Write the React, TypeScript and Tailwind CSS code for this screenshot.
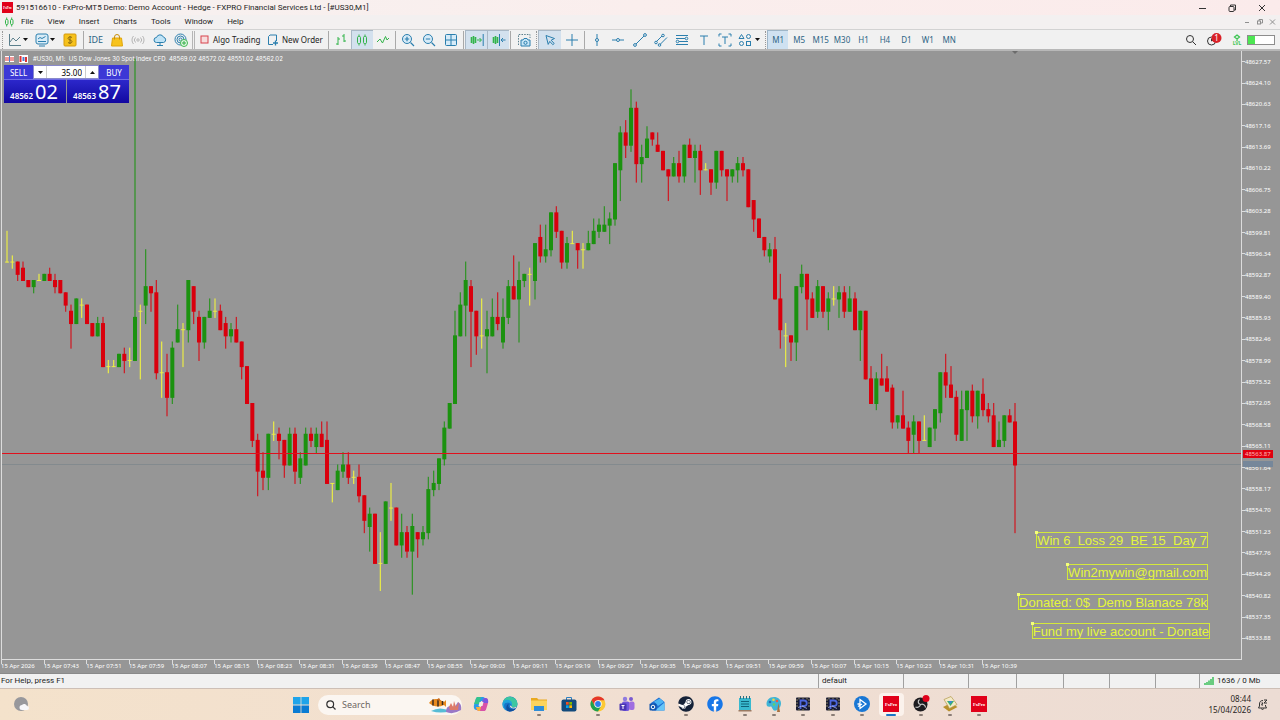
import React, { FC, ReactNode, memo, useState } from "react";
import { FaFacebook, FaSteam } from "react-icons/fa";

// open, high, low, close in points above 48500
type Candle = [number, number, number, number];

const CANDLES: Candle[] = [
  [95, 100, 95, 95], [95, 96, 94, 95], [95, 95, 92, 93], [94, 95, 92, 92], [92, 92, 91, 91],
  [91, 92, 90, 92], [92, 93, 92, 92], [92, 93, 92, 93], [93, 94, 92, 92], [92, 93, 90, 91],
  [92, 92, 90, 90], [90, 90, 87, 88], [87, 88, 81, 85], [85, 89, 85, 89], [88, 89, 86, 88],
  [88, 88, 85, 85], [85, 85, 83, 83], [83, 86, 83, 85], [85, 86, 78, 78], [78, 79, 77, 78],
  [78, 79, 78, 78], [78, 80, 78, 80], [80, 81, 77, 79], [79, 81, 78, 79], [79, 128, 79, 86],
  [87, 88, 76, 87], [88, 97, 85, 91], [91, 91, 87, 90], [90, 92, 76, 77], [77, 82, 73, 77],
  [77, 80, 70, 73], [73, 82, 72, 81], [82, 88, 82, 84], [84, 85, 78, 84], [84, 92, 82, 92],
  [91, 91, 85, 87], [86, 87, 79, 82], [82, 86, 81, 86], [86, 89, 86, 87], [87, 89, 86, 87],
  [87, 88, 84, 84], [85, 86, 81, 83], [83, 85, 82, 84], [84, 86, 82, 82], [82, 82, 76, 78],
  [78, 78, 72, 72], [72, 72, 65, 66], [66, 67, 57, 61], [61, 64, 58, 60], [60, 67, 58, 67],
  [67, 69, 66, 67], [67, 68, 63, 66], [66, 66, 60, 62], [62, 68, 62, 67], [67, 68, 59, 61],
  [60, 64, 59, 63], [62, 68, 62, 67], [67, 68, 65, 66], [65, 68, 64, 67], [67, 69, 65, 65],
  [66, 69, 59, 59], [59, 59, 56, 59], [58, 62, 58, 61], [61, 64, 60, 62], [62, 64, 59, 60],
  [60, 61, 59, 60], [60, 62, 56, 57], [57, 57, 51, 53], [52, 55, 48, 54], [54, 54, 46, 46],
  [46, 51, 41.6, 46], [46, 56, 46, 56], [55, 59, 53, 55], [55, 55, 49, 49], [49, 54, 47, 51],
  [51, 52, 47, 48], [48, 54, 41, 52], [51, 51, 47, 50], [50, 52, 49, 51], [51, 60, 50, 58],
  [58, 61, 57, 59], [59, 63, 58, 63], [63, 69, 62, 68], [68, 72, 68, 72], [72, 87, 72, 83],
  [83, 90, 83, 88], [88, 95, 83, 92], [91, 92, 78, 87], [87, 87, 80, 83], [83, 89, 81, 83],
  [83, 87, 77, 84], [83, 89, 83, 86], [86, 90, 84, 85], [82, 89, 81, 86], [86, 92, 85, 91],
  [91, 96, 89, 89], [89, 95, 82, 92], [92, 93, 91, 93], [93, 94, 88, 93], [92, 98, 89, 98],
  [99, 101, 95, 96], [96, 101, 95, 97], [97, 103, 96, 103], [103, 104, 99, 100], [100, 100, 94, 95],
  [95, 99, 94, 98], [98, 100, 98, 98], [98, 98, 94, 97], [97, 98, 94, 97], [97, 100, 97, 98],
  [98, 102, 98, 100], [100, 102, 99, 101], [100, 104, 100, 101], [101, 103, 98, 102], [102, 111, 101, 111],
  [110, 117, 105, 116], [116, 118, 112, 114], [114, 123, 113, 120], [120, 121, 108, 111], [111, 114, 108, 112],
  [112, 117, 112, 115], [116, 116, 114, 115], [114, 116, 113, 113], [113, 113, 110, 110], [110, 110, 105, 109],
  [109, 112, 109, 111], [111, 113, 108, 109], [109, 114, 108, 114], [114, 115, 112, 112], [112, 114, 108, 113],
  [113, 114, 106, 110], [110, 111, 110, 110], [110, 110, 106, 108], [108, 113, 107, 113], [113, 113, 109, 110],
  [110, 110, 105, 109], [109, 110, 108, 110], [110, 112, 108, 111], [111, 112, 109, 110], [110, 110, 104, 104],
  [105, 105, 100, 102], [102, 102, 99, 99], [99, 99, 96, 97], [96, 98, 95, 97], [97, 99, 89, 89],
  [89, 93, 81, 84], [83, 85, 78, 83], [83, 83, 79, 82], [82, 91, 79, 91], [91, 94.5, 90, 93],
  [93, 93, 84, 89], [89, 90, 86, 86], [87, 92, 86, 91], [91, 91, 86, 87], [87, 90, 84, 89],
  [89, 91, 88, 89], [89, 91, 86, 90], [90, 91, 86, 87], [87, 91, 87, 89], [89, 90, 84, 84],
  [84, 87, 79, 87], [87, 87, 76, 76], [76, 78, 72, 72], [72, 77, 71, 76], [76, 80, 75, 75],
  [76, 78, 74, 74], [74.5, 75, 68, 69], [69, 70, 68, 70], [70, 74, 68, 68], [68, 69, 64, 66],
  [67, 70, 64, 69], [69, 69, 64, 66], [66, 70, 66, 66], [65, 68, 65, 68], [68, 71, 66, 71],
  [70.5, 77, 69, 77], [77, 80, 73, 75], [75, 78, 73, 73], [73, 74, 66, 67], [66, 74, 66, 71],
  [71, 74, 66, 74], [74, 75, 69, 70], [70, 74, 68, 74], [73.5, 76, 70, 71], [71, 72, 69, 70],
  [70, 72, 65, 65], [65, 69, 65, 66], [66, 70, 65, 70], [70, 71, 69, 69], [69, 72, 51, 62]
];

const STEP = 16 / 3;
const POINT = 6.15;

const PRICES = Array.from({ length: 28 }, (_, i) => (48627.57 - i * 3.47).toFixed(2));

const TIMES = Array.from({ length: 24 }, (_, i) => {
  if (i === 0) return "15 Apr 2026";
  const minutes = 455 + i * 8;
  const hh = String(Math.floor(minutes / 60)).padStart(2, "0");
  const mm = String(minutes % 60).padStart(2, "0");
  return `15 Apr ${hh}:${mm}`;
});

const MENU = ["File", "View", "Insert", "Charts", "Tools", "Window", "Help"];
const FRAMES = ["M1", "M5", "M15", "M30", "H1", "H4", "D1", "W1", "MN"];

const priceY = (n: number) => 414 - (n - 62) * POINT;

const Candles = memo(() => (
  <svg className="absolute inset-0 w-full h-full" viewBox="0 0 1239 608" preserveAspectRatio="none">
    {CANDLES.map(([open, high, low, close], i) => {
      const x = 5 + i * STEP;
      const doji = open === close;
      const color = doji ? "#eaec48" : close > open ? "#1b920f" : "#d9000d";
      const top = priceY(Math.max(open, close));
      const bottom = priceY(Math.min(open, close));
      return (
        <g key={i} fill={color}>
          <rect
            x={x - 0.6}
            y={priceY(high) - 0.5}
            width={1.2}
            height={(high - low) * POINT + 1}
            opacity={doji ? 1 : 0.85}
          />
          <rect x={x - 2} y={top - 0.5} width={4} height={bottom - top + 1} />
        </g>
      );
    })}
    <path d="M1010 0h6l-3 3z" fill="#6b6b6b" />
  </svg>
));

const Svg: FC<{ children: ReactNode; className?: string; box?: string }> = ({
  children,
  className = "w-3.5 h-3.5",
  box = "0 0 14 14"
}) => (
  <svg viewBox={box} className={className} fill="none" stroke="#2b7fae" strokeWidth="1" aria-hidden="true">
    {children}
  </svg>
);

const Caret = () => (
  <svg viewBox="0 0 5 3" className="w-[5px] h-[3px]" aria-hidden="true">
    <path d="M0 0h5L2.5 3z" fill="#111" />
  </svg>
);

const Sep = () => <div className="w-px h-[18px] mx-px bg-[#a9a9a9]" />;
const Grip = () => <div className="w-px h-[18px] mx-px border-l border-dotted border-[#999]" />;

const Tool: FC<{ label: string; active?: boolean; children: ReactNode }> = ({ label, active, children }) => (
  <button
    aria-label={label}
    className={
      active
        ? "h-[19px] flex items-center justify-center bg-[#d3e1ee] border-l border-t border-[#a9b8c6]"
        : "h-[19px] flex items-center justify-center"
    }>
    {children}
  </button>
);

const FxLogo: FC<{ className: string }> = ({ className }) => (
  <svg viewBox="0 0 16 16" className={className} aria-hidden="true">
    <rect width="16" height="16" fill="#e1001a" />
    <text x="8" y="9.6" fontSize="4.6" fontWeight="700" fill="#fff" textAnchor="middle" fontFamily="Liberation Serif, serif">
      FxPro
    </text>
  </svg>
);

const Toolbar = () => (
  <div className="h-5 flex items-center border-t border-[#d2d2d2] bg-[#f1f1f1] text-[#2c6484]">
    <div className="w-1 flex justify-center"><Grip /></div>
    <button aria-label="Line chart" className="w-[27px] h-[19px] pl-1 flex items-center gap-px">
      <Svg><path d="M1.5 1v11.5H13M2 9l3-4 3 3 4-4" stroke="#5b7f8c" /></Svg>
      <Caret />
    </button>
    <button aria-label="Templates" className="w-[27px] h-[19px] pl-1 flex items-center gap-px">
      <Svg>
        <rect x="1" y="1" width="12" height="10" rx="2" fill="#d9ecf7" />
        <path d="M3 6l2-1.500 2 1L10.500 3.500M3 8.500h8M4 13h6" />
      </Svg>
      <Caret />
    </button>
    <button aria-label="Market" className="w-6 h-[19px] flex items-center justify-center">
      <Svg>
        <rect x="1" y="1" width="12" height="12" rx="1" fill="#f6c21c" stroke="#d69a0b" />
        <path d="M9 4.500C8 3.500 5 3.700 5 5.400S9 6.800 9 8.600 6 10.600 5 9.500M7 3v8" stroke="#8a6a10" />
      </Svg>
    </button>
    <Sep />
    <div className="grid grid-cols-5 w-[107px]">
      <button className="h-[19px] text-[9px]">IDE</button>
      <Tool label="Shop">
        <Svg>
          <path d="M2.500 5h9l1 8h-11z" fill="#f7c31d" stroke="#e0a50c" />
          <path d="M4.500 6.500V4a2.500 2.500 0 015 0v2.500" stroke="#c98f0b" />
        </Svg>
      </Tool>
      <Tool label="Signals">
        <Svg>
          <g stroke="#b5b5b5">
            <circle cx="7" cy="7" r="1.200" />
            <path d="M4.500 4.500a3.500 3.500 0 000 5M9.500 4.500a3.500 3.500 0 010 5M2.500 3a6 6 0 000 8M11.500 3a6 6 0 010 8" />
          </g>
        </Svg>
      </Tool>
      <Tool label="VPS">
        <Svg>
          <path d="M4 9.500H3.500a2.500 2.500 0 010-5 3.700 3.700 0 017-.3 2.700 2.700 0 010 5.300H4z" fill="#bfe3f6" />
          <path d="M7 9.500V12M4 12.500h6" />
        </Svg>
      </Tool>
      <Tool label="Community">
        <Svg>
          <circle cx="6.500" cy="6.500" r="5.500" />
          <circle cx="6.500" cy="6.500" r="3.500" />
          <circle cx="6.500" cy="6.500" r="1.500" />
          <circle cx="10" cy="10" r="3.500" fill="#e6f8e6" stroke="#3fb950" />
          <path d="M10 8v4M8 10h4" stroke="#2fae45" />
        </Svg>
      </Tool>
    </div>
    <div className="w-[3px] h-[18px] border-x border-[#b5b5b5]" />
    <button className="w-[66px] h-[19px] ml-[5px] flex items-center gap-1 text-[8px] text-[#1d1d1d] whitespace-nowrap">
      <Svg className="w-[9px] h-[9px]" box="0 0 9 9"><rect x="1" y="1" width="7" height="7" fill="#f6dcdc" stroke="#d8434c" /></Svg>
      Algo Trading
    </button>
    <button className="w-[61px] h-[19px] pl-px flex items-center gap-[3px] text-[8px] text-[#1d1d1d] whitespace-nowrap">
      <Svg className="w-3 h-3" box="0 0 12 12">
        <path d="M3 1h6.500v6M3 1L1.500 2.500v8H6" />
        <path d="M8.500 6.500v5M6 9h5" strokeWidth="1.300" />
      </Svg>
      New Order
    </button>
    <Sep />
    <div className="grid grid-cols-3 w-16">
      <Tool label="Bar chart">
        <Svg><path d="M4 4v8M2 11h2M4 6h2M10 1v8M8 3h2M10 8h2" stroke="#32b44a" /></Svg>
      </Tool>
      <Tool label="Candles" active>
        <Svg>
          <g stroke="#32b44a">
            <rect x="2.500" y="3.500" width="3" height="7" rx="1" />
            <rect x="8.500" y="3.500" width="3" height="7" rx="1" />
            <path d="M4 1.500v2M4 10.500v2M10 1.500v2M10 10.500v2" />
          </g>
        </Svg>
      </Tool>
      <Tool label="Line">
        <Svg><path d="M1 9l3-3 2.500 4 3-6.500L11 7l2-2" stroke="#32b44a" /></Svg>
      </Tool>
    </div>
    <Sep />
    <div className="grid grid-cols-3 w-[65px]">
      <Tool label="Zoom in"><Svg><circle cx="6" cy="6" r="4.500" fill="#d6ebf8" /><path d="M9.500 9.500L13 13M3.800 6h4.400M6 3.800v4.400" strokeWidth="1.200" /></Svg></Tool>
      <Tool label="Zoom out"><Svg><circle cx="6" cy="6" r="4.500" fill="#d6ebf8" /><path d="M9.500 9.500L13 13M3.800 6h4.400" strokeWidth="1.200" /></Svg></Tool>
      <Tool label="Tile windows"><Svg><rect x="1.500" y="1.500" width="11" height="11" rx="1" fill="#d6ebf8" /><path d="M7 1.500v11M1.500 7h11" /></Svg></Tool>
    </div>
    <Sep />
    <div className="grid grid-cols-2 w-11">
      <Tool label="Auto scroll" active>
        <Svg>
          <path d="M1.500 4v6M3.500 3v8M5.500 4v6" stroke="#32b44a" strokeWidth="1.600" />
          <path d="M7 7h4M9.500 5l2 2-2 2" stroke="#32b44a" />
          <path d="M13.200 1v12" />
        </Svg>
      </Tool>
      <Tool label="Chart shift" active>
        <Svg>
          <path d="M1.500 4v6M3.500 3v8M5.500 4v6" stroke="#32b44a" strokeWidth="1.600" />
          <path d="M7.500 1v12M13.500 7h-4M11 5L9 7l2 2" />
        </Svg>
      </Tool>
    </div>
    <Sep />
    <button aria-label="Screenshot" className="w-[23px] h-[19px] flex items-center justify-center">
      <Svg>
        <path d="M1.500 12V1.500H13V5" strokeDasharray="1.500 1.200" stroke="#5b7f8c" />
        <path d="M4 7h2l1-1.500h3L11 7h2v6H4z" fill="#c9e6f7" />
        <circle cx="8.500" cy="9.800" r="1.600" />
      </Svg>
    </button>
    <Grip />
    <div className="grid grid-cols-2 w-[45px]">
      <Tool label="Cursor" active><Svg><path d="M3 2.500l8.500 3-3.300 1.700 3 3.300-1.400 1.200-3-3.300-1.600 3z" /></Svg></Tool>
      <Tool label="Crosshair"><Svg><path d="M7 1v12M1 7h12" /></Svg></Tool>
    </div>
    <Sep />
    <div className="grid grid-cols-7 w-[150px]">
      <Tool label="Vertical line"><Svg><path d="M7 1v4.500M7 8.500V13" /><circle cx="7" cy="7" r="1.500" /></Svg></Tool>
      <Tool label="Horizontal line"><Svg><path d="M1 7h4.500M8.500 7H13" /><circle cx="7" cy="7" r="1.500" /></Svg></Tool>
      <Tool label="Trend line"><Svg><path d="M3 11l8-8" /><circle cx="2" cy="12" r="1.400" /><circle cx="12" cy="2" r="1.400" /></Svg></Tool>
      <Tool label="Channel"><Svg><path d="M2.500 8.500l5.500-5.500M6 11.500l7-7" /><circle cx="2" cy="9.500" r="1.300" /><circle cx="9" cy="2.500" r="1.300" /><circle cx="5.500" cy="12" r="1.300" /></Svg></Tool>
      <Tool label="Fibonacci"><Svg><path d="M1 2.500h12M1 5.500h9M4 8.500h9M1 11.500h12" /><circle cx="11.500" cy="5.500" r="1.300" /><circle cx="2.500" cy="8.500" r="1.300" /></Svg></Tool>
      <Tool label="Text"><Svg><path d="M3 3h8M7 3v9" /></Svg></Tool>
      <Tool label="Text label"><Svg><path d="M4 4h6M7 4v7M1 3.500V1h2.500M10.500 1H13v2.500M13 10.500V13h-2.500M3.500 13H1v-2.500" /></Svg></Tool>
    </div>
    <button aria-label="Objects" className="w-7 h-[19px] pl-0.5 flex items-center gap-[3px]">
      <Svg>
        <path d="M3.500 1.500L6 5.500H1z" />
        <circle cx="10.500" cy="3.500" r="2" />
        <circle cx="3.500" cy="10.500" r="2" />
        <rect x="8.500" y="8.500" width="4" height="4" />
      </Svg>
      <Caret />
    </button>
    <Grip />
    <div className="grid grid-cols-9 w-[193px] text-[8px]">
      {FRAMES.map((name, i) => (
        <button
          key={name}
          className={i === 0 ? "h-[19px] bg-[#cfe1f1] border-l border-t border-[#9fb6c8]" : "h-[19px]"}>
          {name}
        </button>
      ))}
    </div>
    <div className="ml-auto pr-[5px] flex items-center gap-[9px]">
      <button aria-label="Search">
        <Svg className="w-3 h-3" box="0 0 12 12"><circle cx="5" cy="5" r="3.500" stroke="#333" /><path d="M7.700 7.700L11 11" stroke="#333" /></Svg>
      </button>
      <button aria-label="Notifications">
        <svg viewBox="0 0 16 14" className="w-4 h-3.5">
          <circle cx="5.500" cy="8" r="4" fill="none" stroke="#333" />
          <path d="M5.500 8l3-1.500M5.500 5.500V8" stroke="#333" fill="none" />
          <circle cx="10.500" cy="5" r="5" fill="#d92027" />
          <text x="10.500" y="7.800" fontSize="8" fill="#fff" textAnchor="middle" fontFamily="Noto Sans, sans-serif">1</text>
        </svg>
      </button>
      <div className="flex items-center gap-1">
        <div className="w-3 flex flex-col items-center text-[5px] leading-[5px] font-bold text-[#3cc552]">
          <svg viewBox="0 0 8 7" className="w-2 h-[7px]" fill="none" stroke="#3cc552" strokeWidth="1.300">
            <path d="M4 1l2.500 2L4 5 1.500 3zM4 5v2" />
          </svg>
          LVL
        </div>
        <div className="w-7 h-2.5 border border-[#8d8d8d] bg-white"><div className="w-[7px] h-full bg-[#4ce652]" /></div>
      </div>
    </div>
  </div>
);

const TradePanel = () => {
  const [volume, setVolume] = useState("35.00");

  return (
    <div className="absolute left-0.5 top-3.5 w-[125px] text-white">
      <div className="h-3.5 flex text-[8px] leading-[13px]">
        <button className="w-[29px] bg-[#3c38d6]">SELL</button>
        <div className="w-[66px] flex bg-white border border-[#8a8acb] text-black">
          <button aria-label="Decrease volume" className="w-[13px] flex items-center justify-center border-r border-[#ccc]"><Caret /></button>
          <input
            aria-label="Volume"
            value={volume}
            onChange={e => setVolume(e.target.value)}
            className="w-[38px] text-right pr-[3px] outline-none"
          />
          <button aria-label="Increase volume" className="w-[13px] flex items-center justify-center border-l border-[#ccc]">
            <span className="rotate-180 flex"><Caret /></span>
          </button>
        </div>
        <button className="w-[30px] bg-[#3c38d6]">BUY</button>
      </div>
      <div className="grid grid-cols-2 gap-px">
        {[["48562", "02"], ["48563", "87"]].map(([big, pips]) => (
          <button
            key={pips}
            className="h-6 pr-0.5 flex items-end justify-center gap-0.5 bg-linear-to-b from-[#2c27cb] to-[#1206a0] border-t border-[#6f6ce6]">
            <span className="text-[8px] leading-[14px] font-semibold">{big}</span>
            <span className="text-[20px] leading-[23px]">{pips}</span>
          </button>
        ))}
      </div>
    </div>
  );
};

const Note: FC<{ className: string; children: string }> = ({ className, children }) => (
  <div
    className={`absolute h-4 border border-[#d4e83a] font-['Liberation_Sans',sans-serif] text-[13px] leading-[15px] whitespace-pre text-[#e4f53c] ${className}`}>
    <span className="absolute -left-0.5 -top-0.5 w-[3px] h-[3px] bg-[#f4ff7a]" />
    {children}
  </div>
);

const Chart = () => (
  <main className="flex-1 min-h-0 flex flex-col bg-[#969696] border-b border-[#8a8a8a]">
    <div className="flex-1 min-h-0 flex">
      <div className="relative flex-1 ml-px border-x border-b border-[#dcdcdc]">
        <div className="absolute inset-x-0 top-[413px] h-px bg-[#838a8e]" />
        <Candles />
        <div className="absolute inset-x-0 top-[402px] h-px bg-[#e0101c]" />
        <div className="absolute left-[3px] top-[3px] flex items-center font-['Inter',sans-serif] text-[6px] leading-[9px] text-white whitespace-pre">
          <svg viewBox="0 0 24 8" className="w-6 h-2 mr-1">
            <rect x="0" y="1" width="9" height="6" fill="#fff" />
            <path d="M0 3h9M0 5h9" stroke="#d33" />
            <path d="M4.500 1v6" stroke="#4a7fd0" />
            <rect x="14" y="0" width="9" height="8" fill="#fff" />
            <path d="M15.500 1v6M21 2v5" stroke="#d33" strokeWidth="2" />
            <path d="M18.500 2v4" stroke="#4a7fd0" strokeWidth="2" />
          </svg>
          {"#US30, M1:  US Dow Jones 30 Spot Index CFD  48569.02 48572.02 48551.02 48562.02"}
        </div>
        <TradePanel />
        <Note className="right-[33px] bottom-[111px]">{"Win 6  Loss 29  BE 15  Day 7"}</Note>
        <Note className="right-[33px] bottom-[79px]">Win2mywin@gmail.com</Note>
        <Note className="right-[33px] bottom-[49px]">{"Donated: 0$  Demo Blanace 78k"}</Note>
        <Note className="right-[31px] bottom-5">Fund my live account - Donate</Note>
      </div>
      <div className="relative w-[38px] pb-[11px] flex flex-col text-[6px] leading-[8px] text-white">
        {PRICES.map(price => (
          <div key={price} className="flex-1 flex items-center">
            <span className="w-[3px] h-px bg-[#dcdcdc]" />
            {price}
          </div>
        ))}
        <div className="absolute left-px top-[399px] w-[30px] h-2 pl-0.5 bg-[#e0000f] text-[#ffb9b9]">48563.87</div>
        <div className="absolute left-px top-[410px] w-[30px] h-1.5 bg-[#76879a]" />
      </div>
    </div>
    <div className="h-[13px] pl-px">
      <div className="grid grid-cols-24 w-4/5 text-[6px] leading-[12px] text-white">
        {TIMES.map(time => (
          <div key={time} className="flex whitespace-nowrap">
            <span className="w-px h-1 -mr-px bg-[#dcdcdc]" />
            {time}
          </div>
        ))}
      </div>
    </div>
  </main>
);

const StatusBar = () => (
  <footer className="h-[15px] flex items-stretch bg-[#f1f1f1] border-b border-[#cdbfb6] font-['Roboto',sans-serif] text-[8px] leading-[14px] text-[#1d1d1d]">
    <div className="flex-1 pl-px">For Help, press F1</div>
    <div className="w-[85px] pl-[3px] border-l border-[#a0a0a0]">default</div>
    <div className="w-[65px] border-l border-[#a0a0a0]" />
    <div className="w-12 border-l border-[#a0a0a0]" />
    <div className="w-[47px] border-l border-[#a0a0a0]" />
    <div className="w-[46px] border-l border-[#a0a0a0]" />
    <div className="w-[46px] border-l border-[#a0a0a0]" />
    <div className="w-11 border-l border-[#a0a0a0]" />
    <div className="w-[81px] pl-1 flex items-center gap-[3px] border-l border-[#a0a0a0]">
      <svg viewBox="0 0 10 8" className="w-2.5 h-2" stroke="#3cbf5b" strokeWidth="1.500">
        <path d="M1 8V6M3 8V5M5 8V3.500M7 8V2M9 8V0" />
      </svg>
      1636 / 0 Mb
    </div>
  </footer>
);

const Mt: FC = () => (
  <>
    <rect x="1" y="1.500" width="14" height="13" rx="1" fill="#191b33" />
    <path d="M1 4h2M1 7h2M1 10h2M13 4h2M13 7h2M13 10h2M4 1.500v2M8 1.500v2M12 1.500v2M4 13v2M8 13v2" stroke="#8c8565" />
    <path d="M5.500 13V4.500h3.500a2.700 2.700 0 010 5.500H7" fill="none" stroke="#4c66dd" strokeWidth="1.800" />
    <path d="M3 11.500l4-1.500 5 2.500" fill="none" stroke="#a9b4e8" strokeWidth=".8" />
  </>
);

const APPS: { name: string; running?: boolean; active?: boolean; art: ReactNode }[] = [
  {
    name: "Copilot",
    art: (
      <>
        <path d="M5 1h5c1.500 0 2 1 2.300 2L13 5H8L6 12c-.4 1.500-1 2-2.500 2C1 14 .5 11 1 9l1.800-6C3.200 1.600 4 1 5 1z" fill="#2a9be8" />
        <path d="M1 8l1.800-5C3.200 1.600 4 1 5 1h3L6 8z" fill="#35c48c" />
        <path d="M11 15H6c-1.500 0-2-1-2.300-2L3 11h5l2-7c.4-1.500 1-2 2.500-2 2.500 0 3 3 2.500 5l-1.800 6c-.4 1.400-1.200 2-2.200 2z" fill="#d951a8" />
        <path d="M3 11h5l-1 4c-2 0-3-.5-3.300-2z" fill="#f6b13a" />
        <path d="M10 4c.4-1.500 1-2 2.500-2 2.500 0 3 3 2.500 5H9z" fill="#7d55e0" />
        <path d="M6.500 6h4l-1 4h-4z" fill="#f6ebe4" />
      </>
    )
  },
  {
    name: "Edge",
    art: (
      <>
        <circle cx="8" cy="8" r="7.500" fill="#1573c9" />
        <path d="M.7 6.500A7.500 7.500 0 0115.500 8c0 2.500-2 3.500-4 3.500-1.500 0-2.500-.7-2-1.500 1-1.500.3-4-2.500-4-3 0-5.500 1.500-6.300.5z" fill="#3cc7a0" />
        <path d="M.7 6.500C2 3.500 5 3.300 7 4c3 .9 3.500 4 2.500 6C9 7 6 5.500 3.500 7 1 8.500 2 13 5 14.900A7.500 7.500 0 01.7 6.500z" fill="#1fa2dc" />
        <path d="M7 7.500c-1.500 1.500-1 5 3 5.700 1.600.3 3-.2 4-.9-2 3-5.500 3.800-8.500 2.800C3.500 13 4 8.500 7 7.500z" fill="#0f4f9e" />
        <path d="M9.500 10c-.5 1 1 2 3 1.500l2-1-.7 1.600c-2 1-6 .4-6-2.600z" fill="#f1dfd3" />
      </>
    )
  },
  {
    name: "Explorer",
    running: true,
    art: (
      <>
        <path d="M0 2h6l1.500 1.500H16V14H0z" fill="#e9a920" />
        <rect y="4.500" width="16" height="9.500" rx=".5" fill="#fcd45c" />
        <rect x="3" y="10" width="10" height="5" fill="#2f8dd8" />
      </>
    )
  },
  {
    name: "Store",
    art: (
      <>
        <path d="M5.500 4V1.500h5V4" fill="none" stroke="#2d7fc1" />
        <rect x=".5" y="3.500" width="15" height="12" rx="2" fill="#134a7c" />
        <path d="M5 6h2.700v2.700H5z" fill="#f25022" />
        <path d="M8.300 6H11v2.700H8.300z" fill="#7fba00" />
        <path d="M5 9.300h2.700V12H5z" fill="#00a4ef" />
        <path d="M8.300 9.300H11V12H8.300z" fill="#ffb900" />
      </>
    )
  },
  {
    name: "Chrome",
    running: true,
    art: (
      <>
        <circle cx="8" cy="8" r="7.500" fill="#fcc934" />
        <path d="M1.500 4.250a7.500 7.500 0 0113 0H8L4.700 9.800z" fill="#e5372b" />
        <path d="M1.500 4.250A7.500 7.500 0 008 15.500l3.300-5.700H4.700z" fill="#1ea150" />
        <circle cx="8" cy="8" r="3.700" fill="#fff" />
        <circle cx="8" cy="8" r="2.900" fill="#2f7de9" />
      </>
    )
  },
  {
    name: "Teams",
    art: (
      <>
        <circle cx="6" cy="3" r="2.200" fill="#8f7ae0" />
        <circle cx="12" cy="3" r="2" fill="#7a5ad0" />
        <rect x="3" y="5.500" width="7.500" height="9.500" rx="2" fill="#7258dd" />
        <rect x="10" y="5.500" width="5.500" height="8.500" rx="2" fill="#a06de0" />
        <rect x=".5" y="7.500" width="7" height="7" rx="1" fill="#4a35b3" />
        <path d="M2.500 9.500h3M4 9.500v3.500" stroke="#fff" />
      </>
    )
  },
  {
    name: "Outlook",
    art: (
      <>
        <path d="M2 7l8-5.500L15.500 6v8.500H3z" fill="#1f6fd2" />
        <path d="M5 5.500l6-3L15 6l-6 4z" fill="#4db4f2" />
        <path d="M15.500 6.500v8H6z" fill="#67c6f7" />
        <rect x=".5" y="7.500" width="7" height="7" rx="1" fill="#0f53ad" />
        <circle cx="4" cy="11" r="1.800" fill="none" stroke="#fff" />
      </>
    )
  },
  { name: "Steam", running: true, art: <><circle cx="8" cy="8" r="7" fill="#fff" /><FaSteam size={16} color="#152238" /></> },
  { name: "Facebook", art: <><circle cx="8" cy="8" r="6" fill="#fff" /><FaFacebook size={16} color="#1877e8" /></> },
  {
    name: "Notepad",
    running: true,
    art: (
      <>
        <rect x="2" y="2" width="12" height="13" fill="#39b9cf" />
        <path d="M4 5.500h8M4 8h8M4 10.500h8" stroke="#0f6379" />
        <path d="M3.500 0v3M6.500 0v3M9.500 0v3M12.500 0v3" stroke="#2b6f83" />
        <rect x="1.500" y="14" width="13" height="1.500" fill="#9a7a62" />
      </>
    )
  },
  {
    name: "Paint",
    running: true,
    art: (
      <>
        <path d="M8 1C3 1 .5 4.500.5 8c0 3 2.500 3 4 2.500S6 13 8 14.500c3 1 7-3 7-7S12 1 8 1z" fill="#3fb5d6" />
        <circle cx="4" cy="6" r="1.300" fill="#2867b2" />
        <circle cx="7.500" cy="3.800" r="1.300" fill="#f5d33f" />
        <circle cx="11" cy="5" r="1.300" fill="#e85746" />
        <circle cx="8" cy="8.500" r="1.300" fill="#62cf6c" />
        <path d="M12.500 7l1.500 9h-3z" fill="#a8703e" />
      </>
    )
  },
  { name: "Terminal 1", running: true, art: <Mt /> },
  { name: "Terminal 2", running: true, art: <Mt /> },
  {
    name: "Player",
    running: true,
    art: (
      <>
        <circle cx="8" cy="8" r="8" fill="#1977d4" />
        <path d="M6 3.500l6 4.500-6 4.500zM6 8H3.500M4 10.500l4-2.500" fill="none" stroke="#fff" strokeWidth="1.300" />
      </>
    )
  },
  { name: "FxPro", running: true, active: true, art: <FxLogo className="w-4 h-4" /> },
  {
    name: "OBS",
    running: true,
    art: (
      <>
        <circle cx="7.500" cy="8.500" r="7" fill="#1d1b1f" />
        <path d="M7.500 8.500C5 8 4.500 5 6.500 3.500M7.500 8.500c2.500-1 5 .5 5 3M7.500 8.500C7 11 4.500 12 2.500 11" fill="none" stroke="#c9c9c9" strokeWidth="1.200" />
        <circle cx="13" cy="2.500" r="3.500" fill="#e0001b" />
      </>
    )
  },
  {
    name: "Editor",
    running: true,
    art: (
      <>
        <path d="M1 11l6 4.500L15.500 11 9 7z" fill="#b8902c" />
        <path d="M2 3.500L9 .5l6 8-7.500 4z" fill="#f3e9c8" stroke="#b19a4a" strokeWidth=".7" />
        <path d="M5 5h7l-3.500 5z" fill="#3bb36b" />
        <path d="M6.500 5h4L8.500 8z" fill="#3f86d8" />
      </>
    )
  },
  { name: "FxPro 2", running: true, art: <FxLogo className="w-4 h-4" /> }
];

const Taskbar = () => (
  <nav className="relative h-[31px] pl-[7px] flex items-center justify-center bg-linear-to-r from-[#f4e2cb] via-[#f1dfd2] to-[#ecdcd4]">
    <button aria-label="Weather" className="absolute left-3.5 top-2">
      <svg viewBox="0 0 15 15" className="w-[15px] h-[15px]">
        <circle cx="7" cy="7" r="7" fill="#98989c" />
        <path d="M8 13a2.500 2.500 0 010-5 3 3 0 015 1 2 2 0 010 4z" fill="#f7f7fa" />
      </svg>
    </button>
    <button aria-label="Start" className="mr-[9px]">
      <svg viewBox="0 0 16 16" className="w-4 h-4">
        <path d="M0 0h7.600v7.600H0zM8.400 0H16v7.600H8.400z" fill="#1fa4ea" />
        <path d="M0 8.400h7.600V16H0zM8.400 8.400H16V16H8.400z" fill="#0a7bd3" />
      </svg>
    </button>
    <div className="w-36 h-5 pl-2 flex items-center gap-1 rounded-full bg-[#fbf6f1]">
      <svg viewBox="0 0 10 10" className="w-2.5 h-2.5" fill="none" stroke="#333" strokeWidth="1.200">
        <circle cx="4.200" cy="4.200" r="3.400" />
        <path d="M6.700 6.700L9.500 9.500" />
      </svg>
      <input
        aria-label="Search"
        placeholder="Search"
        className="min-w-0 flex-1 ml-0.5 text-[9px] outline-none placeholder:text-[#6d6763]"
      />
      <svg viewBox="0 0 34 18" className="w-[34px] h-[18px]">
        <path d="M3 15q9-5 19 0-9 3-19 0z" fill="#57bcd6" />
        <path d="M1 7Q5 1 12 4l4 2 2-2v7l-2-2Q8 13 1 7z" fill="#e98a1d" />
        <path d="M5 3.500v6M10 3.500v7M14.500 5v4" stroke="#3b2b20" strokeWidth="1.500" />
        <path d="M8 4l3-2 2 3" fill="#c7691a" />
        <path d="M18 16q0-7 6-6l2 2 4-6q4 2 3 8-8 5-15 2z" fill="#9a78c6" />
        <path d="M21 11l2-4 2 4 1-6 2 6 3-5-1 8h-8z" fill="#dd7a68" />
      </svg>
    </div>
    <div className="grid grid-cols-18 w-[528px] ml-1">
      {APPS.map(app => (
        <button key={app.name} aria-label={app.name} className="relative h-[31px] flex justify-center">
          {app.active && <span className="absolute inset-x-0.5 top-1 bottom-1 rounded-sm bg-[#fbf2ec]" />}
          <svg viewBox="0 0 16 16" className="relative mt-[7px] w-4 h-4 overflow-visible">{app.art}</svg>
          {app.running && (
            <span
              className={
                app.active
                  ? "absolute bottom-1 w-2.5 h-0.5 rounded-full bg-[#1b73c4]"
                  : "absolute bottom-1 w-1 h-0.5 rounded-full bg-[#8a7d76]"
              }
            />
          )}
        </button>
      ))}
    </div>
    <div className="absolute right-3 top-1 flex items-center gap-1.5 text-[8px] leading-[11px] text-right text-[#2a2523]">
      <div>
        <div>08:44</div>
        <div>15/04/2026</div>
      </div>
      <svg viewBox="0 0 11 11" className="w-[11px] h-[11px]" fill="none" stroke="#333">
        <path d="M6 1.500C3.500 1.500 2.500 3 2.500 5v2L1.500 9h8l-1-2V6M4.500 9.500a1 1 0 002 0M7 1h3L7 4h3M4.500 4h1.500L4.500 6H6" />
      </svg>
    </div>
  </nav>
);

const App = () => (
  <div className="h-screen flex flex-col overflow-hidden font-['Noto_Sans',sans-serif] text-[#1d1d1d]">
    <header className="h-[15px] pl-0.5 flex items-center bg-linear-to-r from-[#f6f1f0] via-[#faeeed] to-[#fbebeb]">
      <FxLogo className="w-[11px] h-[11px] mr-[3px]" />
      <h1 className="font-['Roboto',sans-serif] text-[8px] whitespace-nowrap">
        591516610 - FxPro-MT5 Demo: Demo Account - Hedge - FXPRO Financial Services Ltd - [#US30,M1]
      </h1>
      <svg viewBox="0 0 70 8" className="ml-auto mr-3 w-[70px] h-2" fill="none" stroke="#333">
        <path d="M1 4.500h7M61 1l6 6M67 1l-6 6" />
        <rect x="31" y="2.500" width="5" height="5" rx="1" />
        <path d="M32.500 2.500V1h5v5H36" />
      </svg>
    </header>
    <div className="h-3.5 pl-1 flex items-center bg-[#f3f0f0]">
      <svg viewBox="0 0 10 10" className="w-2.5 h-2.5 mr-[7px]" fill="none" stroke="#32b44a">
        <rect x="1.500" y="2.500" width="2.500" height="5" rx="1" />
        <rect x="6.500" y="2.500" width="2.500" height="5" rx="1" />
        <path d="M2.700 .5v2M2.700 7.500v2M7.700 .5v2M7.700 7.500v2" />
      </svg>
      <div className="flex gap-3.5 font-['Roboto',sans-serif] text-[8px]">
        {MENU.map(item => (
          <button key={item}>{item}</button>
        ))}
      </div>
      <svg viewBox="0 0 32 6" className="ml-auto mr-1 w-8 h-1.5" fill="none" stroke="#8f8f8f">
        <path d="M1 3.500h4M26 .5l5 5M31 .5l-5 5" />
        <rect x="13.500" y="2" width="3" height="3" />
        <path d="M15 2V.5h3.500V4H17" />
      </svg>
    </div>
    <Toolbar />
    <div className="h-0.5 bg-[#b8b8b8]" />
    <Chart />
    <StatusBar />
    <Taskbar />
  </div>
);

export default App;
